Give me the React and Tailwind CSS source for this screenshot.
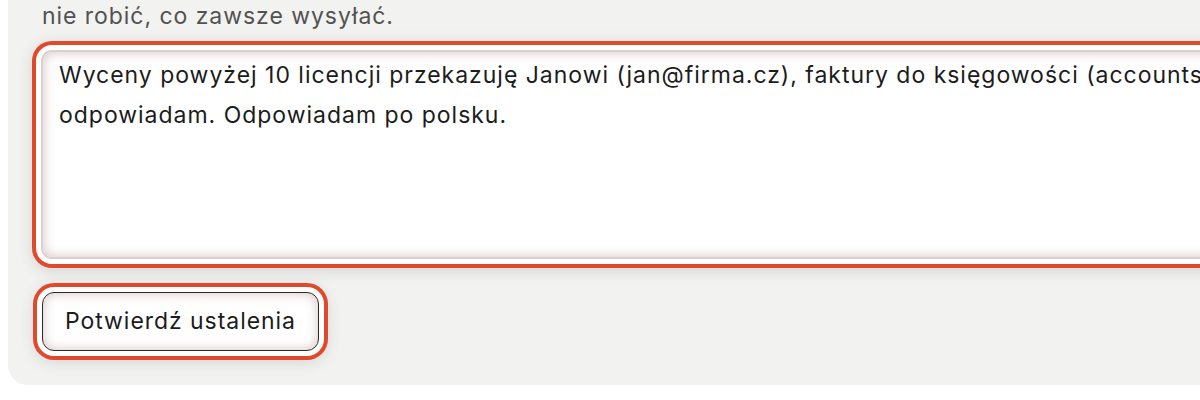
export default function App() {
  const value =
    "Wyceny powyżej 10 licencji przekazuję Janowi (jan@firma.cz), faktury do księgowości (accounts@firma.cz), na spam nie\nodpowiadam. Odpowiadam po polsku.";

  return (
    <div className="w-[1200px] h-[400px] overflow-hidden bg-white font-['Inter','Noto_Sans',sans-serif]">
      <div className="ml-2 w-[1900px] bg-[#f2f2f0] rounded-bl-[20px] px-[34px] pb-[34px]">
        <p className="text-[23px] leading-[32px] tracking-[0.95px] text-[#525252]">
          nie robić, co zawsze wysyłać.
        </p>

        <div className="mt-[19px]">
          <textarea
            readOnly
            value={value}
            className="block w-[1800px] h-[207px] resize-none rounded-[10px] border border-[#d9d0cf] bg-white px-4 pt-[3px] text-[23px] leading-[40px] tracking-[0.98px] text-[#1c1c1c] outline-none shadow-[inset_0_0_12px_rgba(150,105,100,0.4),0_0_0_1px_#d9d0cf,0_0_0_6px_#ffffff,0_0_0_10px_#e04a2c,0_3px_16px_10px_rgba(0,0,0,0.12)]"
          />
        </div>

        <div className="mt-[34px]">
          <button
            type="button"
            className="flex h-[59px] w-[277px] items-center justify-center rounded-[12px] border border-[#2b2b2b] bg-white text-[23px] tracking-[0.95px] text-[#1c1c1c] shadow-[inset_0_0_12px_rgba(150,105,100,0.4),0_0_0_5px_#ffffff,0_0_0_9px_#e04a2c,0_3px_16px_8px_rgba(0,0,0,0.12)]"
          >
            Potwierdź ustalenia
          </button>
        </div>
      </div>
    </div>
  );
}
